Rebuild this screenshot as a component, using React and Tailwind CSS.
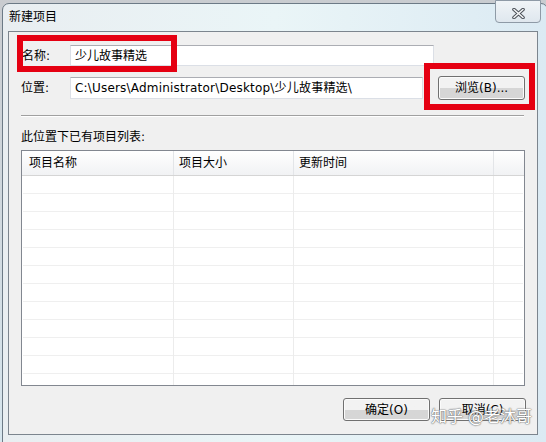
import React from "react";

const font = { fontFamily: '"DejaVu Sans", "Noto Sans CJK SC", sans-serif' };

function CloseGlyph() {
    return (
        <svg width="13" height="11" viewBox="0 0 13 11">
            <path d="M2 1.5 L11 9.5 M11 1.5 L2 9.5" stroke="#4a4f57" strokeWidth="3.6" strokeLinecap="round" fill="none" />
            <path d="M2 1.5 L11 9.5 M11 1.5 L2 9.5" stroke="#f4f6f8" strokeWidth="1.6" strokeLinecap="round" fill="none" />
        </svg>
    );
}

function WinButton({ children, className = "" }) {
    return (
        <button
            className={`h-[23px] w-[87px] rounded-[3px] border border-[#707070] bg-gradient-to-b from-[#f2f2f2] from-50% to-[#d6d6d6] to-50% shadow-[inset_0_0_0_1px_#fbfbfb] text-[12px] leading-none text-black ${className}`}
        >
            {children}
        </button>
    );
}

function Column({ width, last }) {
    return (
        <div className={`flex flex-col ${last ? "flex-1" : `${width} border-r border-[#ececec]`}`}>
            {Array.from({ length: 11 }).map((_, i) => (
                <div key={i} className="h-[18px] shrink-0 border-b border-[#efefef]" />
            ))}
        </div>
    );
}

export default function App() {
    return (
        <div style={font} className="relative h-[442px] w-[546px] overflow-hidden bg-gradient-to-b from-[#c9ccd0] to-[#d7e6ee] text-black">
            {/* window frame */}
            <div className="ml-[2px] mt-[3px] h-[445px] w-[546px] rounded-t-[7px] border border-[#6c7a86] bg-gradient-to-r from-[#e9eef1] via-[#eaf5f7] to-[#dbeaf3] pl-[5px]">
                {/* title bar */}
                <div className="flex h-[27px] items-start justify-between">
                    <div className="pl-[1px] pt-[5px] text-[12px] leading-[16px]">新建项目</div>
                    <div className="mr-[6px] -mt-[4px] flex h-[23px] w-[46px] items-center justify-center rounded-b-[4px] border border-[#8e9aa6] bg-gradient-to-b from-[#f0f4f7] to-[#dfe7ee] pt-[3px]">
                        <CloseGlyph />
                    </div>
                </div>

                {/* client area */}
                <div className="relative h-[404px] w-[530px] border border-[#7c858e] bg-[#f0f0f0] pl-[12px] pr-[12px]">
                    {/* name */}
                    <div className="mt-[13px] flex h-[21px] items-center">
                        <div className="w-[49px] pl-[1px] text-[12px]">名称:</div>
                        <div className="flex h-[21px] w-[364px] items-center border border-[#dbdfe6] border-t-[#abadb3] bg-white px-[4px] text-[12px]">
                            少儿故事精选
                        </div>
                    </div>

                    {/* location */}
                    <div className="mt-[10px] flex h-[24px] items-center">
                        <div className="w-[49px] text-[12px]">位置:</div>
                        <div className="flex h-[22px] w-[354px] items-center overflow-hidden whitespace-nowrap border border-[#dbdfe6] border-t-[#abadb3] bg-white px-[4px] text-[12px] tracking-[0.2px]">
                            C:\Users\Administrator\Desktop\少儿故事精选\
                        </div>
                        <WinButton className="ml-[15px] h-[24px]">浏览(B)...</WinButton>
                    </div>

                    {/* separator */}
                    <div className="mt-[15px] h-[2px] w-[503px] border-t border-b border-[#a0a0a0] border-b-white" />

                    <div className="mt-[12px] h-[16px] text-[12px] leading-[16px]">此位置下已有项目列表:</div>

                    {/* list */}
                    <div className="mt-[5px] flex h-[236px] w-[504px] flex-col border border-[#828790] bg-white">
                        <div className="flex h-[25px] shrink-0 border-b border-[#d5d5d5] bg-gradient-to-b from-white to-[#f1f2f4] text-[12px]">
                            <div className="flex w-[152px] items-center border-r border-[#e3e5e8] pl-[7px]">项目名称</div>
                            <div className="flex w-[120px] items-center border-r border-[#e3e5e8] pl-[5px]">项目大小</div>
                            <div className="flex w-[200px] items-center border-r border-[#e3e5e8] pl-[5px]">更新时间</div>
                            <div className="flex-1" />
                        </div>
                        <div className="flex flex-1 overflow-hidden px-[1px]">
                            <Column width="w-[151px]" />
                            <Column width="w-[120px]" />
                            <Column width="w-[200px]" />
                            <Column last />
                        </div>
                    </div>

                    {/* buttons */}
                    <div className="mt-[12px] flex w-[504px] justify-end gap-[9px]">
                        <WinButton>确定(O)</WinButton>
                        <WinButton className="-mr-[1px]">取消(C)</WinButton>
                    </div>

                    {/* red annotation boxes */}
                    <div className="absolute left-[8px] top-[3px] h-[37px] w-[160px] border-[6px] border-[#e50012]" />
                    <div className="absolute left-[415px] top-[31px] h-[47px] w-[111px] border-[6px] border-[#e50012]" />
                </div>
            </div>

            {/* watermark */}
            <div className="absolute left-[431px] top-[407px] text-[16px] leading-[20px] text-white [text-shadow:0_0_1px_#6b6b6b,0_0_1px_#6b6b6b,0_0_2px_#9a9a9a]">
                知乎 @老沐哥
            </div>
        </div>
    );
}
